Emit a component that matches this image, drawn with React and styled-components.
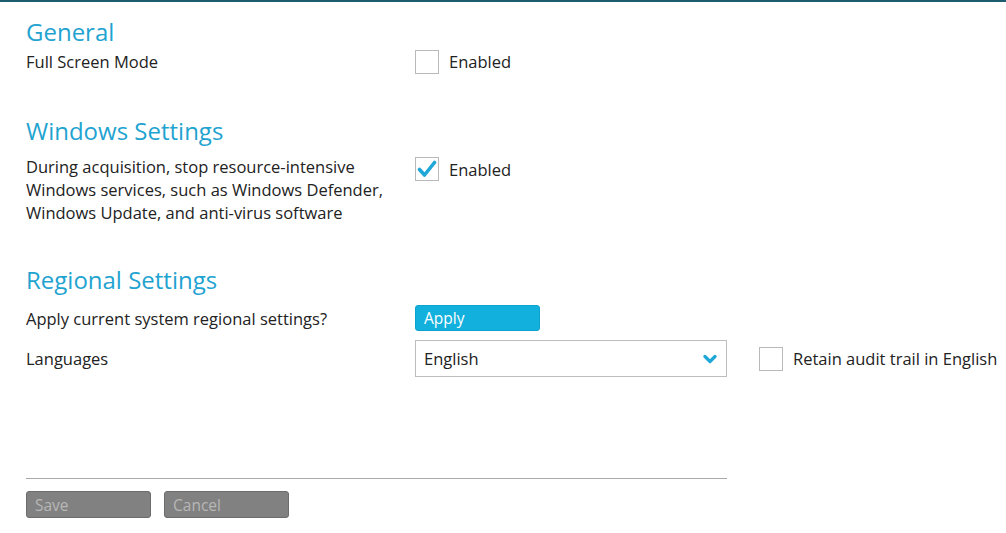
import React from "react";
import styled, { createGlobalStyle } from "styled-components";

const Global = createGlobalStyle`
  html, body { margin: 0; padding: 0; background: #fff; }
  body { font-family: "Open Sans", "Noto Sans", sans-serif; color: #222; }
`;

const Page = styled.div`
  width: 1006px;
  height: 533px;
  box-sizing: border-box;
  border-top: 2px solid #1d5b6f;
  padding: 15px 0 0 26px;
  overflow: hidden;
`;

const Section = styled.section`
  display: flex;
  flex-direction: column;
  margin-bottom: ${(p) => p.$gap || 0}px;
`;

const Heading = styled.h2`
  margin: 0 0 ${(p) => p.$mb || 0}px;
  font-size: 24px;
  font-weight: 400;
  line-height: 30px;
  color: #1fa3d0;
`;

const Row = styled.div`
  display: flex;
  align-items: ${(p) => (p.$top ? "flex-start" : "center")};
  min-height: ${(p) => p.$h || 30}px;
  margin-top: ${(p) => p.$mt || 0}px;
`;

const Label = styled.div`
  flex: 0 0 389px;
  box-sizing: border-box;
  padding-right: 6px;
  font-size: 16.5px;
  line-height: 23px;
  color: #222;
`;

const CheckWrap = styled.label`
  display: flex;
  align-items: center;
  gap: 10px;
  font-size: 16.5px;
  line-height: 23px;
  color: #222;
  cursor: pointer;
  margin-left: ${(p) => p.$ml || 0}px;
  margin-top: ${(p) => p.$mt || 0}px;
`;

const Box = styled.span`
  width: 22px;
  height: 22px;
  border: 1px solid #b9b9b9;
  background: #fff;
  display: flex;
  align-items: center;
  justify-content: center;
`;

const ApplyButton = styled.button`
  width: 125px;
  height: 26px;
  border: 1px solid #0ea3cf;
  border-radius: 3px;
  background: #12b0dd;
  color: #fff;
  font-family: inherit;
  font-size: 15.5px;
  text-align: left;
  padding: 0 8px;
  line-height: 24px;
`;

const Select = styled.div`
  width: 312px;
  height: 37px;
  box-sizing: border-box;
  border: 1px solid #bdbdbd;
  display: flex;
  align-items: center;
  justify-content: space-between;
  padding: 0 9px 0 8px;
  font-size: 16.5px;
  color: #222;
`;

const Divider = styled.hr`
  width: 701px;
  margin: 0;
  border: none;
  border-top: 1px solid #a9a9a9;
`;

const Footer = styled.div`
  display: flex;
  gap: 13px;
  margin-top: 12px;
`;

const GreyButton = styled.button`
  width: 125px;
  height: 27px;
  border: 1px solid #6c6c6c;
  border-radius: 3px;
  background: #818181;
  color: #b7b7b7;
  font-family: inherit;
  font-size: 15.5px;
  text-align: left;
  padding: 0 8px;
`;

const Check = ({ checked }) => (
  <Box>
    {checked && (
      <svg width="20" height="18" viewBox="0 0 20 18">
        <path d="M2.5 9.5 L7.5 15 L17.5 2.5" fill="none" stroke="#1ea7d7" strokeWidth="3.6" strokeLinecap="round" strokeLinejoin="round" />
      </svg>
    )}
  </Box>
);

const Chevron = () => (
  <svg width="14" height="10" viewBox="0 0 14 10">
    <path d="M2 2.5 L7 7.5 L12 2.5" fill="none" stroke="#1ea7d7" strokeWidth="3.2" strokeLinecap="round" strokeLinejoin="round" />
  </svg>
);

export default function App() {
  return (
    <>
      <Global />
      <Page>
        <Section $gap={40}>
          <Heading>General</Heading>
          <Row $h={29}>
            <Label>Full Screen Mode</Label>
            <CheckWrap>
              <Check />
              Enabled
            </CheckWrap>
          </Row>
        </Section>
        <Section $gap={41}>
          <Heading $mb={9}>Windows Settings</Heading>
          <Row $top>
            <Label>
              During acquisition, stop resource-intensive Windows services, such as Windows Defender, Windows Update, and anti-virus software
            </Label>
            <CheckWrap $mt={2}>
              <Check checked />
              Enabled
            </CheckWrap>
          </Row>
        </Section>
        <Section $gap={101}>
          <Heading>Regional Settings</Heading>
          <Row $mt={8}>
            <Label>Apply current system regional settings?</Label>
            <ApplyButton>Apply</ApplyButton>
          </Row>
          <Row $mt={7} $h={37}>
            <Label>Languages</Label>
            <Select>
              English
              <Chevron />
            </Select>
            <CheckWrap $ml={32}>
              <Check />
              Retain audit trail in English
            </CheckWrap>
          </Row>
        </Section>
        <Divider />
        <Footer>
          <GreyButton disabled>Save</GreyButton>
          <GreyButton disabled>Cancel</GreyButton>
        </Footer>
      </Page>
    </>
  );
}
